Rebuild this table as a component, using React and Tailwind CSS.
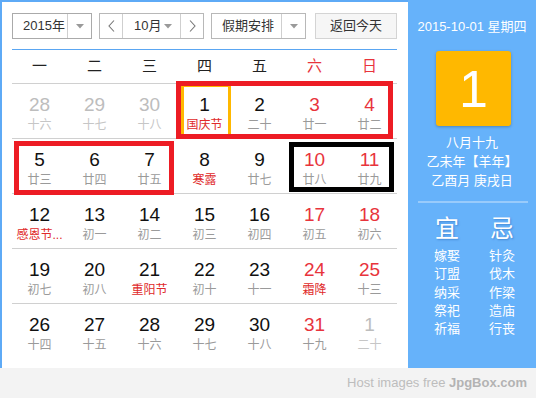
import React from "react";

const FONT = "font-['Liberation_Sans','Noto_Sans_CJK_SC',sans-serif]";

const rows = [
  [
    { n: 28, l: "十六", t: "prev" },
    { n: 29, l: "十七", t: "prev" },
    { n: 30, l: "十八", t: "prev" },
    { n: 1, l: "国庆节", fest: true },
    { n: 2, l: "二十" },
    { n: 3, l: "廿一", we: true },
    { n: 4, l: "廿二", we: true },
  ],
  [
    { n: 5, l: "廿三" },
    { n: 6, l: "廿四" },
    { n: 7, l: "廿五" },
    { n: 8, l: "寒露", fest: true },
    { n: 9, l: "廿七" },
    { n: 10, l: "廿八", we: true },
    { n: 11, l: "廿九", we: true },
  ],
  [
    { n: 12, l: "感恩节...", fest: true },
    { n: 13, l: "初一" },
    { n: 14, l: "初二" },
    { n: 15, l: "初三" },
    { n: 16, l: "初四" },
    { n: 17, l: "初五", we: true },
    { n: 18, l: "初六", we: true },
  ],
  [
    { n: 19, l: "初七" },
    { n: 20, l: "初八" },
    { n: 21, l: "重阳节", fest: true },
    { n: 22, l: "初十" },
    { n: 23, l: "十一" },
    { n: 24, l: "霜降", fest: true, we: true },
    { n: 25, l: "十三", we: true },
  ],
  [
    { n: 26, l: "十四" },
    { n: 27, l: "十五" },
    { n: 28, l: "十六" },
    { n: 29, l: "十七" },
    { n: 30, l: "十八" },
    { n: 31, l: "十九", we: true },
    { n: 1, l: "二十", t: "prev" },
  ],
];

const Tri = () => (
  <svg width="8" height="5" viewBox="0 0 8 5">
    <polygon points="0,0 8,0 4,4.5" fill="#9a9a9a" />
  </svg>
);

const Chev = ({ dir }) => (
  <svg width="7" height="12" viewBox="0 0 7 12">
    <polyline
      points={dir === "l" ? "6,0.5 1,6 6,11.5" : "1,0.5 6,6 1,11.5"}
      fill="none"
      stroke="#777"
      strokeWidth="1.1"
    />
  </svg>
);

function Cell({ d }) {
  let numCls = "text-[#111]";
  let lunCls = "text-[#9a9a9a]";
  if (d.t === "prev") {
    numCls = "text-[#bdbdbd]";
    lunCls = "text-[#c6c6c6]";
  } else if (d.we) {
    numCls = "text-[#e8343c]";
  }
  if (d.fest) lunCls = "text-[#e02a2a]";
  return (
    <div className="flex flex-col items-center pt-[10px]">
      <div className={`text-[19px] leading-[22px] ${numCls}`}>{d.n}</div>
      <div className={`text-[12px] leading-[18px] whitespace-nowrap ${lunCls}`}>{d.l}</div>
    </div>
  );
}

export default function App() {
  const weekdays = ["一", "二", "三", "四", "五", "六", "日"];
  return (
    <div className={`relative w-[536px] h-[398px] bg-[#f3f3f3] ${FONT}`}>
      <div className="flex h-[368px]">
        {/* Left calendar */}
        <div className="w-[408px] h-full bg-white border-l-2 border-t-2 border-[#5eaaf6] pl-[10px] pt-[11px]">
          {/* Toolbar */}
          <div className="flex h-[26px] text-[13px] text-[#333]">
            <div className="w-[80px] flex border border-[#aaaaaa] bg-white">
              <div className="flex-1 flex items-center pl-[10px]">2015年</div>
              <div className="w-[24px] border-l border-[#cfcfcf] flex items-center justify-center">
                <Tri />
              </div>
            </div>
            <div className="ml-[7px] w-[105px] flex border border-[#b8b8b8] bg-white">
              <div className="w-[22px] flex items-center justify-center">
                <Chev dir="l" />
              </div>
              <div className="flex-1 border-l border-r border-[#cfcfcf] flex items-center justify-between pl-[11px] pr-[8px]">
                <span>10月</span>
                <Tri />
              </div>
              <div className="w-[22px] flex items-center justify-center">
                <Chev dir="r" />
              </div>
            </div>
            <div className="ml-[7px] w-[95px] flex border border-[#b8b8b8] bg-white">
              <div className="flex-1 flex items-center pl-[10px]">假期安排</div>
              <div className="w-[24px] border-l border-[#cfcfcf] flex items-center justify-center">
                <Tri />
              </div>
            </div>
            <div className="ml-[9px] w-[82px] flex items-center justify-center border border-[#d4d4d4] bg-[#f6f6f6]">
              返回今天
            </div>
          </div>
          <div className="mt-[10px] w-[385px] h-px bg-[#5aa6f2]" />
          {/* Weekday header */}
          <div className="w-[385px] grid grid-cols-7 h-[33px] text-[15px] items-center">
            {weekdays.map((w, i) => (
              <div
                key={w}
                className={`text-center ${i >= 5 ? "text-[#e8343c]" : "text-[#222]"}`}
              >
                {w}
              </div>
            ))}
          </div>
          {rows.map((r, ri) => (
            <div
              key={ri}
              className="w-[385px] grid grid-cols-7 h-[55px] border-t border-[#d0d0d0]"
            >
              {r.map((d, di) => (
                <Cell key={di} d={d} />
              ))}
            </div>
          ))}
        </div>
        {/* Right panel */}
        <div className="flex-1 h-full bg-[#66b2fa] text-white">
          <div className="pt-[19px] text-center text-[13px] leading-[16px]">2015-10-01 星期四</div>
          <div className="mt-[16px] ml-[28px] w-[75px] h-[75px] rounded-[3px] bg-[#ffb800] shadow-[0_1px_3px_rgba(0,0,0,0.25)] flex items-center justify-center text-[52px] leading-none">
            1
          </div>
          <div className="mt-[7px] text-center text-[13px] leading-[19px]">
            <div>八月十九</div>
            <div>
              乙未年<span className="inline-block w-[13px] text-center">【</span>羊年<span className="inline-block w-[13px] text-center">】</span>
            </div>
            <div>乙酉月 庚戌日</div>
          </div>
          <div className="mt-[11px] ml-[10px] mr-[8px] h-[2px] bg-[#99cbfb]" />
          <div className="flex pl-[17px] gap-[11px]">
            <div className="w-[44px] text-center">
              <div className="mt-[12px] text-[24px] leading-[28px] [text-shadow:1px_1px_2px_rgba(0,60,140,0.35)]">宜</div>
              <div className="mt-[4px] text-[13px] leading-[18.3px]">
                <div>嫁娶</div>
                <div>订盟</div>
                <div>纳采</div>
                <div>祭祀</div>
                <div>祈福</div>
              </div>
            </div>
            <div className="w-[44px] text-center">
              <div className="mt-[12px] text-[24px] leading-[28px] [text-shadow:1px_1px_2px_rgba(0,60,140,0.35)]">忌</div>
              <div className="mt-[4px] text-[13px] leading-[18.3px]">
                <div>针灸</div>
                <div>伐木</div>
                <div>作梁</div>
                <div>造庙</div>
                <div>行丧</div>
              </div>
            </div>
          </div>
        </div>
      </div>
      {/* Footer */}
      <div className="h-[30px] flex items-center justify-end pr-[9px] text-[13px] text-[#bdbdbd]">
        <span>Host images free&nbsp;</span>
        <span className="font-bold text-[#b3b3b3]">JpgBox.com</span>
      </div>

      {/* Annotation overlays */}
      <div className="absolute left-[181px] top-[84px] w-[50px] h-[53px] border-[3px] border-[#ffb800]" />
      <div className="absolute left-[176px] top-[81px] w-[217px] h-[58px] border-[5px] border-[#ed1c24]" />
      <div className="absolute left-[14px] top-[141px] w-[160px] h-[54px] border-[5px] border-[#ed1c24]" />
      <div className="absolute left-[289px] top-[142px] w-[105px] h-[50px] border-[5px] border-black" />
    </div>
  );
}
